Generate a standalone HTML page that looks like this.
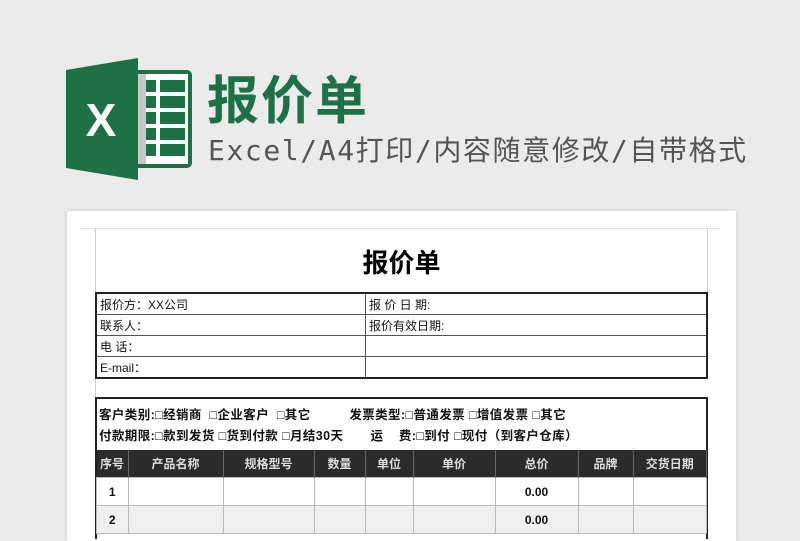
<!DOCTYPE html>
<html><head><meta charset="utf-8"><style>
body{margin:0;width:800px;height:526px;background:#ebebeb;position:relative;overflow:hidden;font-family:"Liberation Sans","Noto Sans CJK SC",sans-serif}
.abs{position:absolute}
.t1{left:207px;top:70px;font-size:52px;font-weight:bold;color:#1e7145;letter-spacing:2px;line-height:64px}
.t2{left:208px;top:133px;font-size:28px;color:#555;letter-spacing:1.6px;line-height:36px;white-space:nowrap;font-family:"DejaVu Sans Mono","Noto Sans CJK SC",monospace}
.paper{left:67px;top:211px;width:669px;height:330px;background:#fff;box-shadow:0 0 4px rgba(0,0,0,.15)}
table{border-collapse:collapse;position:absolute;font-size:12px;color:#111}
td{padding:0 3px;white-space:nowrap}
.info td{border:1px solid #555;height:20px}
.hd td{background:#2b2b2b;color:#ddd;font-weight:bold;text-align:center;height:27px;border-right:1px solid #666;font-size:12px}
.rw td{border:1px solid #bbb;height:27px;text-align:center;font-weight:bold}
</style></head><body>
<svg class="abs" style="left:66px;top:58px" width="130" height="122" viewBox="0 0 130 122">
<rect x="64" y="12" width="62" height="98" rx="5" fill="#1e7145"/>
<rect x="68" y="16" width="54" height="90" fill="#fff"/>
<rect x="68" y="16" width="12" height="90" fill="#c8c8c8"/>
<g fill="#1e7145">
<rect x="80" y="22" width="10" height="12"/><rect x="94" y="22" width="25" height="12"/>
<rect x="80" y="38" width="10" height="12"/><rect x="94" y="38" width="25" height="12"/>
<rect x="80" y="54" width="10" height="12"/><rect x="94" y="54" width="25" height="12"/>
<rect x="80" y="70" width="10" height="12"/><rect x="94" y="70" width="25" height="12"/>
<rect x="80" y="86" width="10" height="12"/><rect x="94" y="86" width="25" height="12"/>
</g>
<polygon points="0,12 72,0 72,122 0,110" fill="#1e7145"/>
<text x="35" y="78" font-size="46" font-weight="bold" fill="#fff" text-anchor="middle" font-family="Liberation Sans">X</text>
</svg>
<div class="abs t1">报价单</div>
<div class="abs t2">Excel/A4打印/内容随意修改/自带格式</div>
<div class="abs paper"></div>
<div class="abs" style="left:80px;top:228px;width:640px;height:1px;background:#ddd"></div>
<div class="abs" style="left:95px;top:229px;width:1px;height:297px;background:#ccc"></div>
<div class="abs" style="left:707px;top:229px;width:1px;height:64px;background:#ccc"></div>
<div class="abs" style="left:300px;top:243px;width:203px;text-align:center;font-size:26px;font-weight:bold;color:#000">报价单</div>
<table class="info" style="left:95px;top:292px;width:613px;border:2px solid #222">
<tr><td style="width:262px">报价方：XX公司</td><td>报 价 日 期:</td></tr>
<tr><td>联系人：</td><td>报价有效日期:</td></tr>
<tr><td>电 话：</td><td></td></tr>
<tr><td>E-mail：</td><td></td></tr>
</table>
<div class="abs" style="left:95px;top:397px;width:609px;height:140px;border:2px solid #222;border-bottom:none;background:#fff"></div>
<div class="abs" style="left:99px;top:405px;font-size:12.5px;color:#111;white-space:pre;line-height:21px;font-weight:bold;letter-spacing:0.4px">客户类别:□经销商  □企业客户  □其它          发票类型:□普通发票 □增值发票 □其它
付款期限:□款到发货 □货到付款 □月结30天       运    费:□到付 □现付（到客户仓库）</div>
<table style="left:96px;top:450px;width:611px">
<tr class="hd"><td style="width:25px">序号</td><td style="width:88px">产品名称</td><td style="width:84px">规格型号</td><td style="width:44px">数量</td><td style="width:41px">单位</td><td style="width:75px">单价</td><td style="width:76px">总价</td><td style="width:48px">品牌</td><td>交货日期</td></tr>
<tr class="rw"><td>1</td><td></td><td></td><td></td><td></td><td></td><td>0.00</td><td></td><td></td></tr>
<tr class="rw" style="background:#f0f0f0"><td>2</td><td></td><td></td><td></td><td></td><td></td><td>0.00</td><td></td><td></td></tr>
</table>
</body></html>
